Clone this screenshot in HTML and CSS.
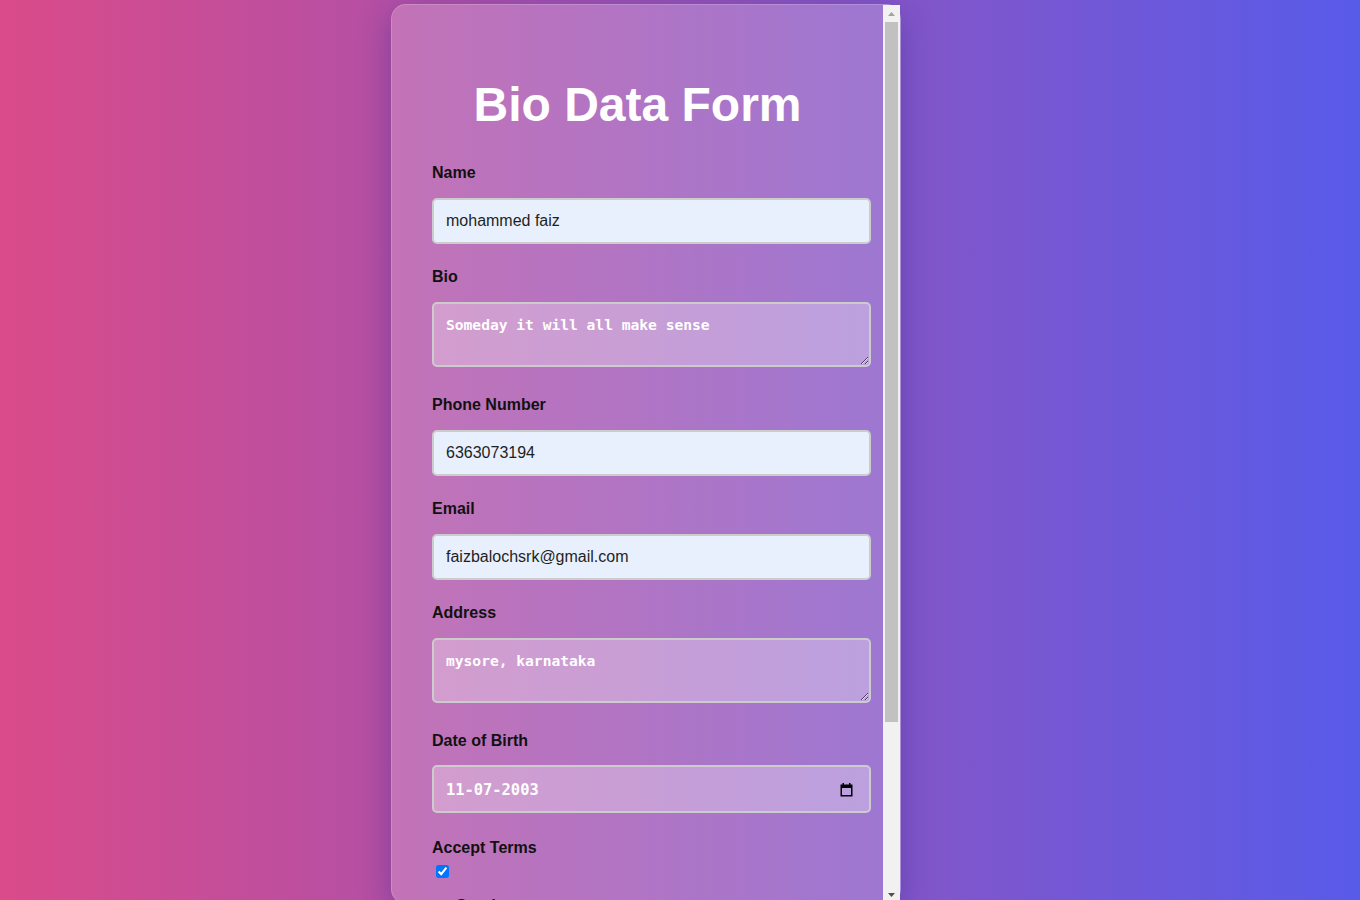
FILE: index.html
```html
<!DOCTYPE html>
<html lang="en">
<head>
<meta charset="utf-8">
<title>Bio Data Form</title>
<link rel="stylesheet" href="styles.css">
</head>
<body>
<div class="page">
  <div class="card">
    <div class="card-body">
      <h1 class="title">Bio Data Form</h1>
      <form class="form">
        <div class="field">
          <label class="label" for="name">Name</label>
          <input class="control control-filled" id="name" type="text" value="mohammed faiz">
        </div>
        <div class="field field-area">
          <label class="label" for="bio">Bio</label>
          <textarea class="control control-area" id="bio">Someday it will all make sense</textarea>
        </div>
        <div class="field">
          <label class="label" for="phone">Phone Number</label>
          <input class="control control-filled" id="phone" type="tel" value="6363073194">
        </div>
        <div class="field">
          <label class="label" for="email">Email</label>
          <input class="control control-filled" id="email" type="email" value="faizbalochsrk@gmail.com">
        </div>
        <div class="field field-area">
          <label class="label" for="address">Address</label>
          <textarea class="control control-area" id="address">mysore, karnataka</textarea>
        </div>
        <div class="field field-date">
          <label class="label" for="dob">Date of Birth</label>
          <div class="control date-field">
            <input class="date-input" id="dob" type="text" value="11-07-2003">
            <svg class="date-icon" width="13" height="15" viewBox="0 0 13 15" aria-hidden="true">
              <rect x="1.25" y="3.25" width="10.5" height="10.5" fill="none" stroke="#000" stroke-width="1.5"/>
              <rect x="1" y="3" width="11" height="3" fill="#000"/>
              <rect x="2.5" y="1" width="1.5" height="3" fill="#000"/>
              <rect x="9" y="1" width="1.5" height="3" fill="#000"/>
            </svg>
          </div>
        </div>
        <div class="field field-terms">
          <label class="label label-terms" for="terms">Accept Terms</label>
          <input class="checkbox" id="terms" type="checkbox" checked>
        </div>
        <div class="field field-gender">
          <span class="label label-gender">Gender</span>
          <div class="radio-row">
            <label class="radio-label"><input type="radio" name="gender" checked> Male</label>
            <label class="radio-label"><input type="radio" name="gender"> Female</label>
          </div>
        </div>
        <button class="button" type="submit">Submit</button>
      </form>
    </div>
    <div class="scrollbar" aria-hidden="true">
      <div class="scroll-btn">
        <svg width="7" height="4" viewBox="0 0 7 4"><path d="M0 4L3.5 0L7 4Z" fill="#a3a3a3"/></svg>
      </div>
      <div class="scroll-track">
        <div class="scroll-thumb"></div>
      </div>
      <div class="scroll-btn">
        <svg width="7" height="4" viewBox="0 0 7 4"><path d="M0 0L7 0L3.5 4Z" fill="#505050"/></svg>
      </div>
    </div>
  </div>
</div>
</body>
</html>
```

FILE: styles.css
```css
html, body {
  margin: 0;
  height: 900px;
  overflow: hidden;
}

body {
  background: linear-gradient(to right, #da4b89, #585be9);
  font-family: "Liberation Sans", Arial, sans-serif;
  font-size: 16px;
}

.page {
  display: flex;
  align-items: flex-start;
  padding: 4px 0 0 391px;
}

.card {
  box-sizing: border-box;
  display: flex;
  width: 510px;
  height: 900px;
  border: 1px solid rgba(255, 255, 255, 0.18);
  border-radius: 15px;
  background: rgba(255, 255, 255, 0.2);
  box-shadow: 0 8px 32px rgba(31, 38, 135, 0.37);
}

.card-body {
  flex: 1;
  min-width: 0;
  padding: 40px;
  overflow: hidden;
}

.scrollbar {
  display: flex;
  flex-direction: column;
  width: 17px;
  flex-shrink: 0;
  background: #f1f1f1;
}

.scroll-btn {
  display: flex;
  align-items: center;
  justify-content: center;
  height: 17px;
  flex-shrink: 0;
}

.scroll-btn svg {
  display: block;
}

.scroll-track {
  flex: 1;
  padding: 0 2px;
}

.scroll-thumb {
  height: 700px;
  background: #c1c1c1;
}

.title {
  margin: 32px 0;
  font-size: 48px;
  line-height: 55px;
  font-weight: 700;
  color: #fff;
  text-align: center;
}

.form {
  margin: 0;
}

.field {
  margin-bottom: 24px;
}

.field-area {
  margin-bottom: 29px;
}

.field-date {
  margin-bottom: 25.5px;
}

.field-terms {
  margin-bottom: 19px;
}

.label {
  display: block;
  margin-bottom: 15.5px;
  font-weight: 700;
  font-size: 16px;
  line-height: 18.4px;
  color: #111;
}

.control {
  display: block;
  width: 100%;
  margin: 0;
  padding: 12px;
  border: 2px solid #cccccc;
  border-radius: 5px;
  font-family: "Liberation Sans", Arial, sans-serif;
  font-size: 16px;
  line-height: 18px;
  outline: none;
}

.control-filled {
  height: 18px;
  background: #e8f0fe;
  color: #1f1f1f;
}

.control-area {
  height: 37px;
  resize: vertical;
  background: rgba(255, 255, 255, 0.3);
  color: #fff;
  font-family: "DejaVu Sans Mono", "Liberation Mono", monospace;
  font-weight: 700;
  font-size: 14.6px;
  line-height: 18.5px;
}

.date-field {
  display: flex;
  align-items: center;
  height: 20px;
  background: rgba(255, 255, 255, 0.3);
}

.date-input {
  flex: 1;
  min-width: 0;
  margin: 0;
  padding: 2px 0 0;
  border: 0;
  background: transparent;
  color: #fff;
  font-family: "DejaVu Sans Mono", "Liberation Mono", monospace;
  font-weight: 700;
  font-size: 15.4px;
  line-height: 20px;
  outline: none;
}

.date-icon {
  display: block;
  margin-right: 4px;
  flex-shrink: 0;
}

.label-terms {
  margin-bottom: 0;
}

.checkbox {
  display: block;
  width: 13px;
  height: 13px;
  margin: 7.5px 0 0 4px;
}

.label-gender {
  margin-bottom: 8px;
  padding-left: 23px;
}

.radio-row {
  display: flex;
  gap: 16px;
  color: #111;
  line-height: 18px;
}

.radio-label {
  display: flex;
  align-items: center;
  gap: 4px;
}

.button {
  display: block;
  width: 100%;
  height: 48px;
  margin: 24px 0 0;
  border: 0;
  border-radius: 5px;
  background: #5a5be9;
  color: #fff;
  font-family: "Liberation Sans", Arial, sans-serif;
  font-size: 16px;
  font-weight: 700;
}
```
